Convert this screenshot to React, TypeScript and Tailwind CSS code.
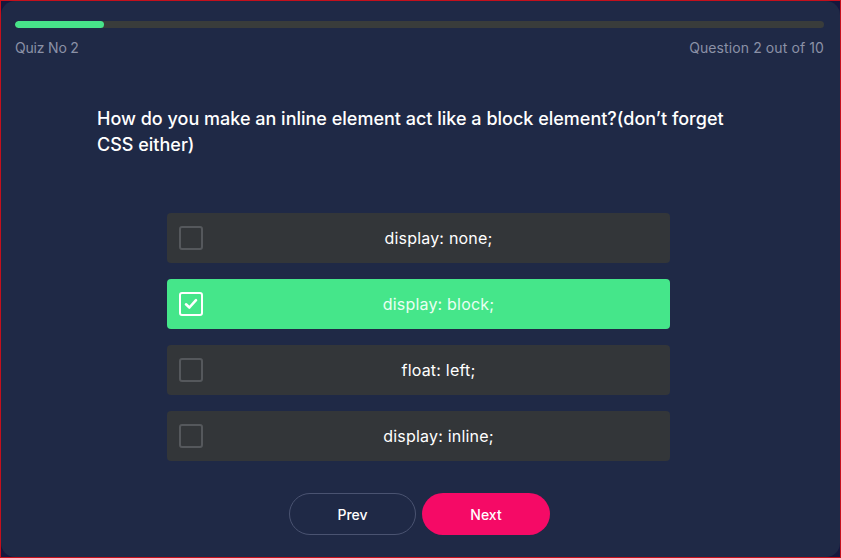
import React from "react";

const options = ["display: none;", "display: block;", "float: left;", "display: inline;"];

export default function App() {
  const selected = 1;
  return (
    <div className="w-[841px] h-[558px] border border-[#c4101c] bg-[#16173d] overflow-hidden" style={{ fontFamily: "Inter, 'Noto Sans', sans-serif" }}>
      <div className="w-full h-full rounded-[14px] bg-[#1f2946] flex flex-col pl-[14px] pr-[16px] pt-[20px]">
        <div className="h-[7px] w-full rounded-full bg-[#393c3b] overflow-hidden">
          <div className="h-full w-[89px] rounded-full bg-[#47e38a]" />
        </div>
        <div className="flex justify-between mt-[11px] text-[14px] leading-[18px] text-[#8b91a6]">
          <span className="tracking-[-0.2px]">Quiz No 2</span>
          <span className="tracking-[0.1px]">Question 2 out of 10</span>
        </div>
        <div className="w-[650px] ml-[82px] mt-[49px]">
          <p className="text-[18px] leading-[26px] font-medium text-white">
            How do you make an inline element act like a block element?(don’t forget CSS either)
          </p>
        </div>
        <div className="w-[503px] ml-[152px] mt-[55px] flex flex-col gap-[16px]">
          {options.map((o, i) => {
            const sel = i === selected;
            return (
              <div key={o} className={`h-[50px] rounded-[4px] flex items-center px-[12px] ${sel ? "bg-[#45e68a]" : "bg-[#333639]"}`}>
                <div className={`w-[24px] h-[24px] rounded-[3px] border-2 flex items-center justify-center ${sel ? "border-white" : "border-[#55585c]"}`}>
                  {sel && (
                    <svg width="16" height="16" viewBox="0 0 16 16" fill="none">
                      <path d="M3 8.3 L6.4 11.5 L13 4.2" stroke="white" strokeWidth="2.6" strokeLinecap="round" strokeLinejoin="round" />
                    </svg>
                  )}
                </div>
                <span className={`flex-1 text-center text-[16px] pl-[16px] tracking-[0.2px] ${sel ? "text-[#e9fff2]" : "text-white"}`}>{o}</span>
              </div>
            );
          })}
        </div>
        <div className="flex justify-center gap-[6px] mt-[32px]">
          <button className="w-[127px] h-[42px] rounded-full border border-[#4a5371] text-white text-[14px] font-medium">Prev</button>
          <button className="w-[128px] h-[42px] rounded-full bg-[#f50a66] text-white text-[14px] font-medium">Next</button>
        </div>
      </div>
    </div>
  );
}
